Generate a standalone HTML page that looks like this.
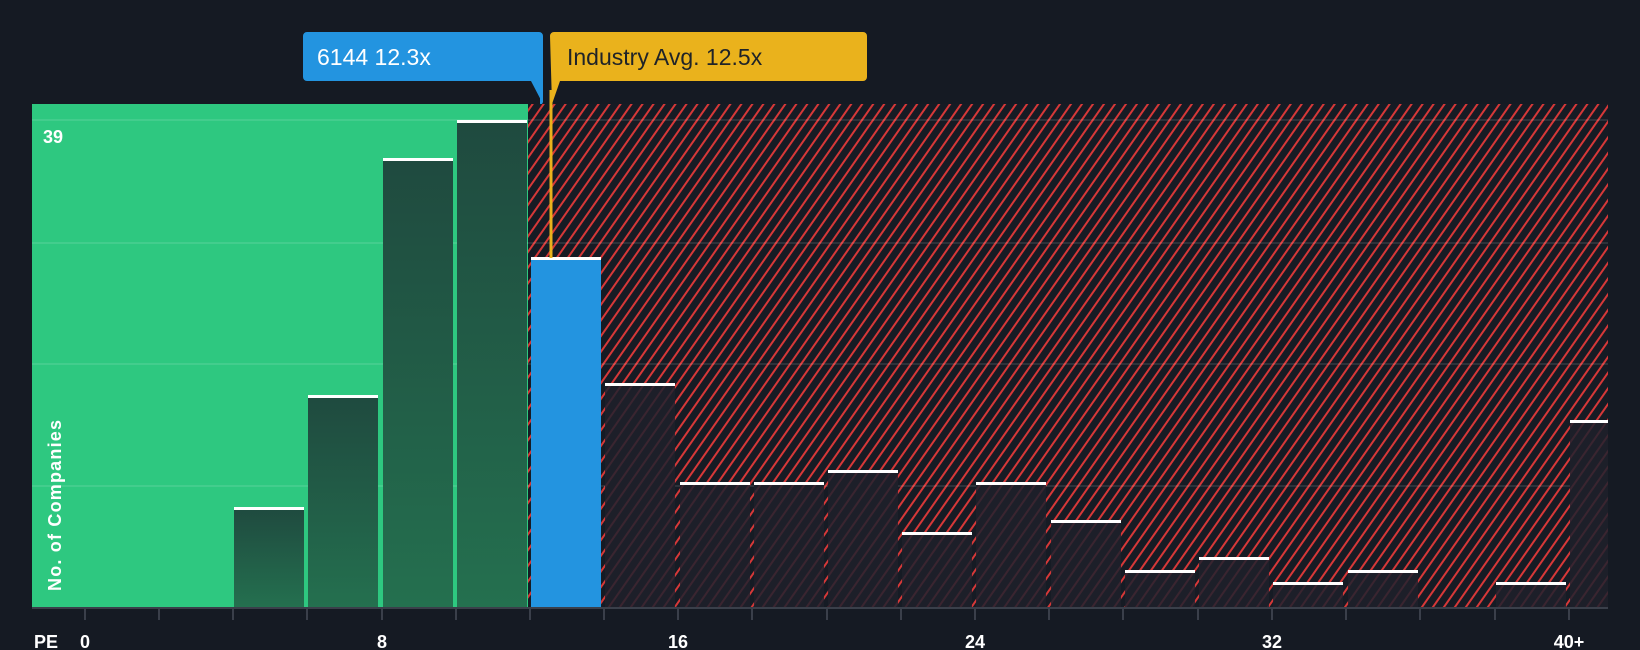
<!DOCTYPE html>
<html><head><meta charset="utf-8"><style>
html,body{margin:0;padding:0;background:#151a23;}
svg{display:block;}
text{font-family:"Liberation Sans",sans-serif;}
</style></head><body>
<svg width="1640" height="650" viewBox="0 0 1640 650" xmlns="http://www.w3.org/2000/svg">
<defs>
<pattern id="h" patternUnits="userSpaceOnUse" width="9" height="9" patternTransform="rotate(35)">
<rect width="9" height="9" fill="#161b24"/>
<rect width="2" height="9" fill="#d63838"/>
</pattern>
<pattern id="h2" patternUnits="userSpaceOnUse" width="9" height="9" patternTransform="rotate(35)">
<rect width="9" height="9" fill="#1d1f29"/>
<rect width="2" height="9" fill="#3a2530"/>
</pattern>
<linearGradient id="g" x1="0" y1="0" x2="0" y2="1">
<stop offset="0" stop-color="#1f4a3f"/><stop offset="1" stop-color="#24704f"/>
</linearGradient>
</defs>
<rect width="1640" height="650" fill="#151a23"/>
<rect x="32" y="104" width="496" height="504" fill="#2ec880"/>
<rect x="528" y="104" width="1080" height="504" fill="url(#h)"/>
<g stroke="#ffffff" stroke-opacity="0.1" stroke-width="2">
<line x1="32" y1="120" x2="1608" y2="120"/><line x1="32" y1="243" x2="1608" y2="243"/>
<line x1="32" y1="364" x2="1608" y2="364"/><line x1="32" y1="486" x2="1608" y2="486"/>
</g>
<g fill="url(#g)">
<rect x="234" y="508" width="70" height="100"/>
<rect x="308" y="396" width="70" height="212"/>
<rect x="383" y="159" width="70" height="449"/>
<rect x="457" y="121" width="70" height="487"/>
</g>
<rect x="531" y="258" width="70" height="350" fill="#2394e0"/>
<g fill="url(#h2)">
<rect x="605" y="384" width="70" height="224"/>
<rect x="680" y="483" width="70" height="125"/>
<rect x="754" y="483" width="70" height="125"/>
<rect x="828" y="471" width="70" height="137"/>
<rect x="902" y="533" width="70" height="75"/>
<rect x="976" y="483" width="70" height="125"/>
<rect x="1051" y="521" width="70" height="87"/>
<rect x="1125" y="571" width="70" height="37"/>
<rect x="1199" y="558" width="70" height="50"/>
<rect x="1273" y="583" width="70" height="25"/>
<rect x="1348" y="571" width="70" height="37"/>
<rect x="1496" y="583" width="70" height="25"/>
<rect x="1570" y="421" width="38" height="187"/>
</g>
<g fill="#ffffff">
<rect x="234" y="507" width="70" height="3"/>
<rect x="308" y="395" width="70" height="3"/>
<rect x="383" y="158" width="70" height="3"/>
<rect x="457" y="120" width="70" height="3"/>
<rect x="531" y="257" width="70" height="3"/>
<rect x="605" y="383" width="70" height="3"/>
<rect x="680" y="482" width="70" height="3"/>
<rect x="754" y="482" width="70" height="3"/>
<rect x="828" y="470" width="70" height="3"/>
<rect x="902" y="532" width="70" height="3"/>
<rect x="976" y="482" width="70" height="3"/>
<rect x="1051" y="520" width="70" height="3"/>
<rect x="1125" y="570" width="70" height="3"/>
<rect x="1199" y="557" width="70" height="3"/>
<rect x="1273" y="582" width="70" height="3"/>
<rect x="1348" y="570" width="70" height="3"/>
<rect x="1496" y="582" width="70" height="3"/>
<rect x="1570" y="420" width="38" height="3"/>
</g>
<line x1="32" y1="608" x2="1608" y2="608" stroke="#3a3f4a" stroke-width="2"/>
<g stroke="#3a3f4a" stroke-width="2">
<line x1="85" y1="608" x2="85" y2="620"/><line x1="159" y1="608" x2="159" y2="620"/><line x1="233" y1="608" x2="233" y2="620"/><line x1="307" y1="608" x2="307" y2="620"/><line x1="382" y1="608" x2="382" y2="620"/><line x1="456" y1="608" x2="456" y2="620"/><line x1="530" y1="608" x2="530" y2="620"/><line x1="604" y1="608" x2="604" y2="620"/><line x1="678" y1="608" x2="678" y2="620"/><line x1="752" y1="608" x2="752" y2="620"/><line x1="827" y1="608" x2="827" y2="620"/><line x1="901" y1="608" x2="901" y2="620"/><line x1="975" y1="608" x2="975" y2="620"/><line x1="1049" y1="608" x2="1049" y2="620"/><line x1="1123" y1="608" x2="1123" y2="620"/><line x1="1198" y1="608" x2="1198" y2="620"/><line x1="1272" y1="608" x2="1272" y2="620"/><line x1="1346" y1="608" x2="1346" y2="620"/><line x1="1420" y1="608" x2="1420" y2="620"/><line x1="1495" y1="608" x2="1495" y2="620"/><line x1="1569" y1="608" x2="1569" y2="620"/>
</g>
<g fill="#ffffff" font-size="18" font-weight="bold">
<text x="34" y="648">PE</text>
<text x="85" y="648" text-anchor="middle">0</text>
<text x="382" y="648" text-anchor="middle">8</text>
<text x="678" y="648" text-anchor="middle">16</text>
<text x="975" y="648" text-anchor="middle">24</text>
<text x="1272" y="648" text-anchor="middle">32</text>
<text x="1569" y="648" text-anchor="middle">40+</text>
<text x="43" y="143">39</text>
<text transform="translate(61,591) rotate(-90)" font-weight="bold" letter-spacing="1.2">No. of Companies</text>
</g>
<line x1="551" y1="90" x2="551" y2="258" stroke="#eab21c" stroke-width="3"/>
<line x1="541" y1="90" x2="541" y2="104" stroke="#2394e0" stroke-width="2"/>
<path d="M303 36 a4 4 0 0 1 4 -4 H539 a4 4 0 0 1 4 4 V104 L531 81 H307 a4 4 0 0 1 -4 -4 Z" fill="#2394e0"/>
<path d="M550 36 a4 4 0 0 1 4 -4 H863 a4 4 0 0 1 4 4 V77 a4 4 0 0 1 -4 4 H560 L552 104 Z" fill="#eab21c"/>
<text x="317" y="65" fill="#ffffff" font-size="23">6144 12.3x</text>
<text x="567" y="65" fill="#1f2328" font-size="23">Industry Avg. 12.5x</text>
</svg>
</body></html>
